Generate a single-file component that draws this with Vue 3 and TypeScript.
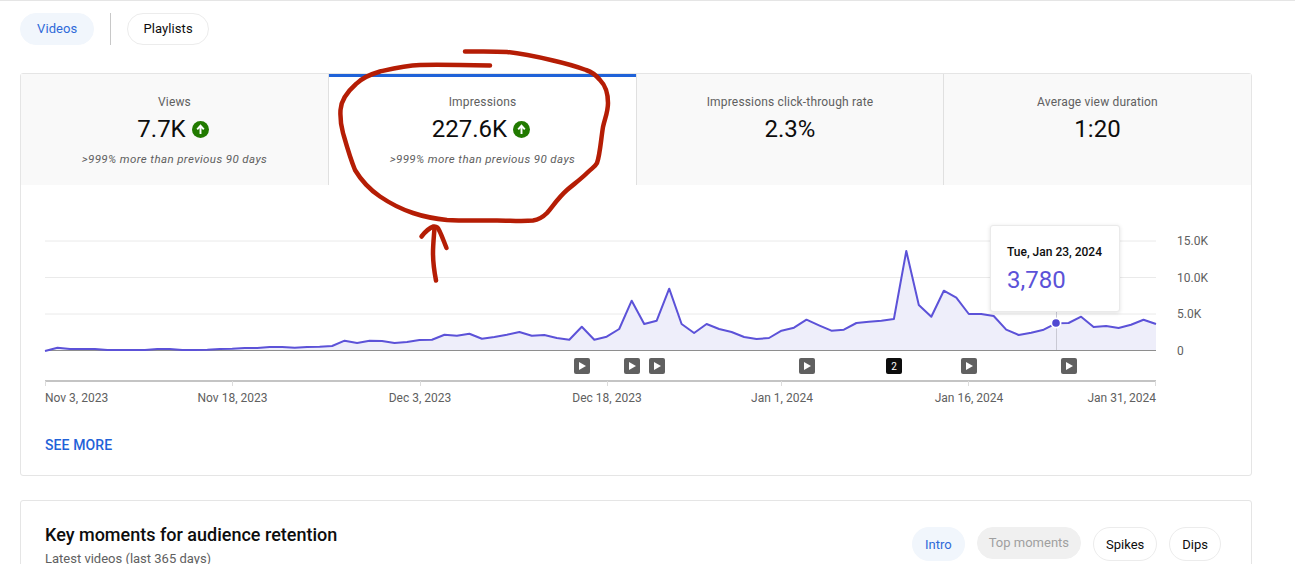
<template>
  <div class="page">
    <div class="filter-row">
      <button class="chip active">Videos</button>
      <span class="divider"></span>
      <button class="chip">Playlists</button>
    </div>

    <section class="card">
      <div class="tabs">
        <div v-for="tab in tabs" :key="tab.label" :class="['tab', { selected: tab.selected }]">
          <div class="tab-label">{{ tab.label }}</div>
          <div :class="['tab-value', { 'has-icon': tab.note }]">
            {{ tab.value }}
            <svg v-if="tab.note" class="up-icon" viewBox="0 0 16 16" width="17" height="17">
              <circle cx="8" cy="8" r="8" fill="#217a00" />
              <path d="M8 12.2V5M4.9 7.8 8 4.4l3.1 3.4" fill="none" stroke="#fff" stroke-width="1.8" />
            </svg>
          </div>
          <div v-if="tab.note" class="tab-note">{{ tab.note }}</div>
        </div>
      </div>

      <div class="chart">
        <svg viewBox="21 185 1230 225" width="1230" height="225">
          <line v-for="y in gridYs" :key="y" x1="45" x2="1156" :y1="y" :y2="y" stroke="#eaeaea" />
          <path :d="areaPath" fill="#eeeefa" />
          <line x1="45" x2="1156" y1="350.5" y2="350.5" stroke="#8e8e8e" />
          <line x1="1056.5" x2="1056.5" y1="312" y2="350" stroke="#c9c9d4" />
          <path :d="linePath" fill="none" stroke="#5c52d8" stroke-width="2" stroke-linejoin="round" />
          <circle cx="1056" cy="323" r="5.5" fill="#fff" />
          <circle cx="1056" cy="323" r="3.8" fill="#5149d2" />

          <g v-for="x in videoMarkers" :key="x">
            <rect :x="x - 8" y="358" width="16" height="16" rx="2" fill="#606060" />
            <path :d="`M${x - 3} 362v8l7-4z`" fill="#fff" />
          </g>
          <rect x="886" y="358" width="16" height="16" rx="2" fill="#0d0d0d" />
          <text x="894" y="370" class="marker-text" text-anchor="middle">2</text>

          <rect x="45" y="380" width="1111" height="2" fill="#c4c4c4" />
          <line v-for="t in ticks" :key="t.label" :x1="t.x + 0.5" :x2="t.x + 0.5" y1="381" y2="386" stroke="#dcdcdc" />
          <text v-for="t in ticks" :key="t.label" :x="t.labelX" y="402" :text-anchor="t.anchor" class="axis-text">{{ t.label }}</text>
          <text v-for="l in yLabels" :key="l.text" x="1177" :y="l.y" class="axis-text">{{ l.text }}</text>
        </svg>

        <div class="tooltip">
          <div class="tooltip-date">Tue, Jan 23, 2024</div>
          <div class="tooltip-value">3,780</div>
        </div>
      </div>

      <a class="see-more">SEE MORE</a>
    </section>

    <section class="card moments">
      <div>
        <h2>Key moments for audience retention</h2>
        <p>Latest videos (last 365 days)</p>
      </div>
      <div class="moment-chips">
        <button class="chip active">Intro</button>
        <button class="chip disabled">Top moments</button>
        <button class="chip">Spikes</button>
        <button class="chip">Dips</button>
      </div>
    </section>

    <!-- hand drawn annotation on top of the screenshot -->
    <svg class="scribble" viewBox="0 0 1295 564" width="1295" height="564">
      <path
        d="M490 65.5C465 65 440 64.5 420 65C405 65.5 393 68.5 380 71.5C368 75 361 79 356 84C347 92 341 100 340.5 110C340 120 341 126 343 133C347 147 350 158 355 170C361 180 369 189 380 196.5C391 204 401 209 413 213C425 217 436 219 447 220C463 221 480 220.5 497 220.5C510 220.5 522 221.5 533 220.5C540 219.5 543 217 547 213C553 206 558 198 567 190C574 184 581 179 587 173C592 168 595 167 597 163C600 155 601 139 603 127C605 118 608 112 608 103C608 93 605 85 600 80C596 75 592 72 586 70C575 66 564 63 553 60.5C538 57 522 53.5 507 52C493 51 479 51.5 465 51.5"
      />
      <path d="M436 280.5C434 270 433 262 433 253C433 244 434 236 434.5 228" />
      <path d="M421.5 236.5C425 232 429 228 433.5 226.5C437 226 438 228 439.5 231C442 236 444 242 446.5 248" />
    </svg>
  </div>
</template>

<script setup lang="ts">
import { computed } from 'vue'

type Tab = {
  label: string
  value: string
  note?: string
  selected?: boolean
}

const tabs: Tab[] = [
  { label: 'Views', value: '7.7K', note: '>999% more than previous 90 days' },
  { label: 'Impressions', value: '227.6K', note: '>999% more than previous 90 days', selected: true },
  { label: 'Impressions click-through rate', value: '2.3%' },
  { label: 'Average view duration', value: '1:20' },
]

// y position of each daily point, Nov 3 to Jan 31
const points = [
  351, 347.7, 349, 349, 349, 350, 350, 350, 350, 349, 349, 350, 350, 349.7, 349, 348.7, 348, 348, 347, 347,
  347.7, 347, 346.7, 346, 340.7, 343, 340.7, 341, 343, 342, 340, 339.7, 334.7, 335.7, 333.7, 338.7, 337, 334.7,
  332, 335.7, 335, 338, 339.7, 326.7, 339.7, 336.7, 329, 300.7, 324, 320.7, 288.7, 324, 333, 324, 329, 332, 337,
  339, 338, 330.7, 327.7, 319.7, 325.3, 330.7, 329.7, 323, 321.7, 320.7, 319, 251, 305, 316.7, 290.7, 297.7, 314,
  314, 316, 329.7, 335, 332.7, 329.7, 323.3, 323, 316.7, 327, 326, 328, 324.7, 319.7, 324,
]

const step = 1111 / (points.length - 1)

const linePath = computed(() =>
  points.map((y, i) => `${i ? 'L' : 'M'}${(45 + i * step).toFixed(1)} ${y}`).join(''),
)
const areaPath = computed(() => `${linePath.value}L1156 350L45 350Z`)

const gridYs = [241, 277.5, 314]
const videoMarkers = [582, 632, 657, 807, 969, 1069]

const ticks = [
  { x: 45, labelX: 45, anchor: 'start', label: 'Nov 3, 2023' },
  { x: 232, labelX: 232.5, anchor: 'middle', label: 'Nov 18, 2023' },
  { x: 420, labelX: 420, anchor: 'middle', label: 'Dec 3, 2023' },
  { x: 607, labelX: 607, anchor: 'middle', label: 'Dec 18, 2023' },
  { x: 781, labelX: 782, anchor: 'middle', label: 'Jan 1, 2024' },
  { x: 968, labelX: 969, anchor: 'middle', label: 'Jan 16, 2024' },
  { x: 1155, labelX: 1156, anchor: 'end', label: 'Jan 31, 2024' },
]

const yLabels = [
  { text: '15.0K', y: 245 },
  { text: '10.0K', y: 282 },
  { text: '5.0K', y: 318 },
  { text: '0', y: 355 },
]
</script>

<style>
html,
body {
  overflow: hidden;
  background: #fff;
}
</style>

<style scoped>
.page {
  position: relative;
  box-sizing: border-box;
  width: 1295px;
  height: 564px;
  overflow: hidden;
  border-top: 1px solid #e5e5e5;
  padding: 12px 43px 0 20px;
  font-family: Roboto, 'Liberation Sans', sans-serif;
  color: #0d0d0d;
}

.filter-row {
  display: flex;
  align-items: center;
  gap: 16px;
  margin-bottom: 28px;
}

.divider {
  width: 1px;
  height: 32px;
  background: #c8c8c8;
}

.chip {
  height: 32px;
  padding: 0 15px 2px;
  border: 1px solid #ececec;
  border-radius: 17px;
  background: #fff;
  font-family: inherit;
  font-size: 13px;
  letter-spacing: 0.1px;
  color: #0d0d0d;
}

.chip.active {
  padding: 0 16px 2px;
  border-color: #f1f6fc;
  background: #f1f6fc;
  color: #2f6ad9;
}

.chip.disabled {
  border-color: #f0f0f0;
  background: #f0f0f0;
  color: #a0a0a0;
}

.card {
  border: 1px solid #e5e5e5;
  border-radius: 3px;
}

.tabs {
  display: grid;
  grid-template-columns: 308px 308px 307px 307px;
  height: 111px;
}

.tab {
  box-sizing: border-box;
  padding-top: 20px;
  background: #f9f9f9;
  border-right: 1px solid #e0e0e0;
  text-align: center;
}

.tab:last-child {
  border-right: none;
}

.tab.selected {
  background: #fff;
  box-shadow: inset 0 3px 0 #1f62d8;
}

.tab-label {
  font-size: 12px;
  line-height: 16px;
  letter-spacing: 0.17px;
  color: #606060;
}

.tab-value {
  display: flex;
  align-items: center;
  justify-content: center;
  gap: 6px;
  margin-top: 5px;
  font-size: 24px;
  line-height: 28px;
}

.tab-value.has-icon {
  padding-right: 3px;
}

.tab-note {
  margin-top: 8px;
  font-size: 11.5px;
  line-height: 16px;
  font-style: italic;
  letter-spacing: 0.4px;
  color: #606060;
}

.chart {
  position: relative;
  height: 225px;
}

.chart svg {
  display: block;
}

.axis-text {
  font-size: 12px;
  fill: #606060;
}

.marker-text {
  font-size: 10px;
  fill: #fff;
}

.tooltip {
  position: absolute;
  left: 969px;
  top: 40px;
  box-sizing: border-box;
  width: 130px;
  height: 87px;
  padding: 19px 16px;
  background: #fff;
  border: 1px solid #eaeaea;
  border-radius: 3px;
  box-shadow: 0 1px 4px rgba(0, 0, 0, 0.12);
}

.tooltip-date {
  font-size: 12px;
  line-height: 14px;
  font-weight: 500;
  white-space: nowrap;
}

.tooltip-value {
  margin-top: 7px;
  font-size: 24px;
  line-height: 28px;
  color: #5c52d8;
}

.see-more {
  display: block;
  padding: 25px 24px 20px;
  font-size: 14px;
  line-height: 20px;
  font-weight: 500;
  letter-spacing: 0.1px;
  color: #1f62d8;
}

.moments {
  display: flex;
  justify-content: space-between;
  margin-top: 24px;
  padding: 23px 30px 0 24px;
}

.moments h2 {
  margin: 0;
  font-size: 18px;
  line-height: 22px;
  font-weight: 500;
}

.moments p {
  margin: 4px 0 0;
  font-size: 13px;
  line-height: 18px;
  color: #606060;
}

.moment-chips {
  display: flex;
  align-items: flex-start;
  gap: 12px;
  margin-top: 3px;
}

.moment-chips .chip {
  height: 34px;
  padding: 0 12px;
  letter-spacing: 0;
}

.moment-chips .chip.disabled {
  height: 32px;
  padding: 0 11px 2px;
}

.scribble {
  position: absolute;
  left: 0;
  top: -1px;
  pointer-events: none;
  fill: none;
  stroke: #b51d05;
  stroke-width: 4.5;
  stroke-linecap: round;
  stroke-linejoin: round;
}
</style>
